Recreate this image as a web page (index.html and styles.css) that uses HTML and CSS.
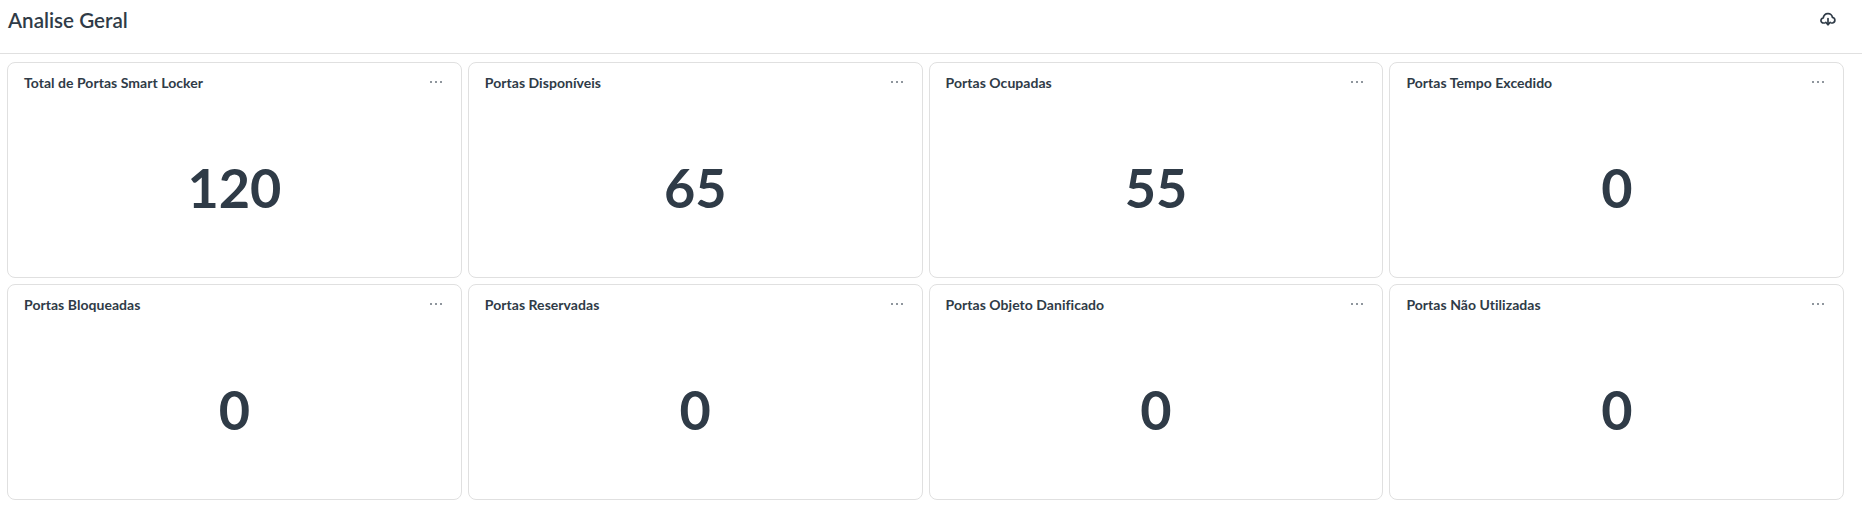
FILE: index.html
```html
<!DOCTYPE html>
<html lang="pt-BR">
<head>
  <meta charset="UTF-8">
  <title>Analise Geral</title>
  <link rel="stylesheet" href="styles.css">
</head>
<body>
  <div class="header">
    <h1 class="page-title">Analise Geral</h1>
    <button class="export-btn" aria-label="Exportar">
      <svg width="16" height="14" viewBox="0 0 16 14" fill="none" stroke="currentColor" stroke-width="1.7" stroke-linecap="round" stroke-linejoin="round">
        <path d="M4.6 11H3.6A2.5 2.5 0 0 1 3.3 6 4.4 4.4 0 0 1 8 1.6a4.2 4.2 0 0 1 4.4 3.7 2.9 2.9 0 0 1 .2 5.7h-1.2"/>
        <path d="M8 6.5v6"/>
        <path d="M5.8 10.4 8 12.6l2.2-2.2"/>
      </svg>
    </button>
  </div>

  <div class="grid">
    <div class="card">
      <div class="card-head"><span class="card-title">Total de Portas Smart Locker</span><span class="card-menu"><i></i><i></i><i></i></span></div>
      <div class="card-value">120</div>
    </div>
    <div class="card">
      <div class="card-head"><span class="card-title">Portas Disponíveis</span><span class="card-menu"><i></i><i></i><i></i></span></div>
      <div class="card-value">65</div>
    </div>
    <div class="card">
      <div class="card-head"><span class="card-title">Portas Ocupadas</span><span class="card-menu"><i></i><i></i><i></i></span></div>
      <div class="card-value">55</div>
    </div>
    <div class="card">
      <div class="card-head"><span class="card-title">Portas Tempo Excedido</span><span class="card-menu"><i></i><i></i><i></i></span></div>
      <div class="card-value">0</div>
    </div>
    <div class="card">
      <div class="card-head"><span class="card-title">Portas Bloqueadas</span><span class="card-menu"><i></i><i></i><i></i></span></div>
      <div class="card-value">0</div>
    </div>
    <div class="card">
      <div class="card-head"><span class="card-title">Portas Reservadas</span><span class="card-menu"><i></i><i></i><i></i></span></div>
      <div class="card-value">0</div>
    </div>
    <div class="card">
      <div class="card-head"><span class="card-title">Portas Objeto Danificado</span><span class="card-menu"><i></i><i></i><i></i></span></div>
      <div class="card-value">0</div>
    </div>
    <div class="card">
      <div class="card-head"><span class="card-title">Portas Não Utilizadas</span><span class="card-menu"><i></i><i></i><i></i></span></div>
      <div class="card-value">0</div>
    </div>
  </div>
</body>
</html>
```

FILE: styles.css
```css
body {
  margin: 0;
  font-family: Lato, "Liberation Sans", sans-serif;
  background: #fff;
  color: #2f3b47;
}

.header {
  display: flex;
  justify-content: space-between;
  align-items: flex-start;
  height: 53px;
  padding: 0 26px 0 8px;
  border-bottom: 1px solid #e0e0e0;
}

.page-title {
  margin: 8px 0 0;
  font-size: 20.6px;
  line-height: 24px;
  font-weight: 600;
}

.export-btn {
  display: flex;
  margin-top: 12px;
  padding: 0;
  border: 0;
  background: none;
  color: #2f3b47;
}

.grid {
  display: grid;
  grid-template-columns: repeat(4, 1fr);
  grid-auto-rows: 216px;
  gap: 6px;
  padding: 8px 17.8px 0 7px;
}

.card {
  display: flex;
  flex-direction: column;
  border: 1px solid #e0e0e0;
  border-radius: 8px;
  box-sizing: border-box;
}

.card-head {
  display: flex;
  justify-content: space-between;
  align-items: flex-start;
  padding: 10px 19px 0 16px;
}

.card-title {
  font-size: 14px;
  line-height: 20px;
  font-weight: 700;
  letter-spacing: 0.04px;
}

.card-menu {
  display: flex;
  gap: 3px;
  margin-top: 8px;
}

.card-menu i {
  width: 2px;
  height: 2px;
  background: #8f969d;
}

.card-value {
  flex: 1;
  display: flex;
  align-items: center;
  justify-content: center;
  padding-top: 4px;
  font-size: 54px;
  font-weight: 700;
  color: #2f3b47;
}
```
